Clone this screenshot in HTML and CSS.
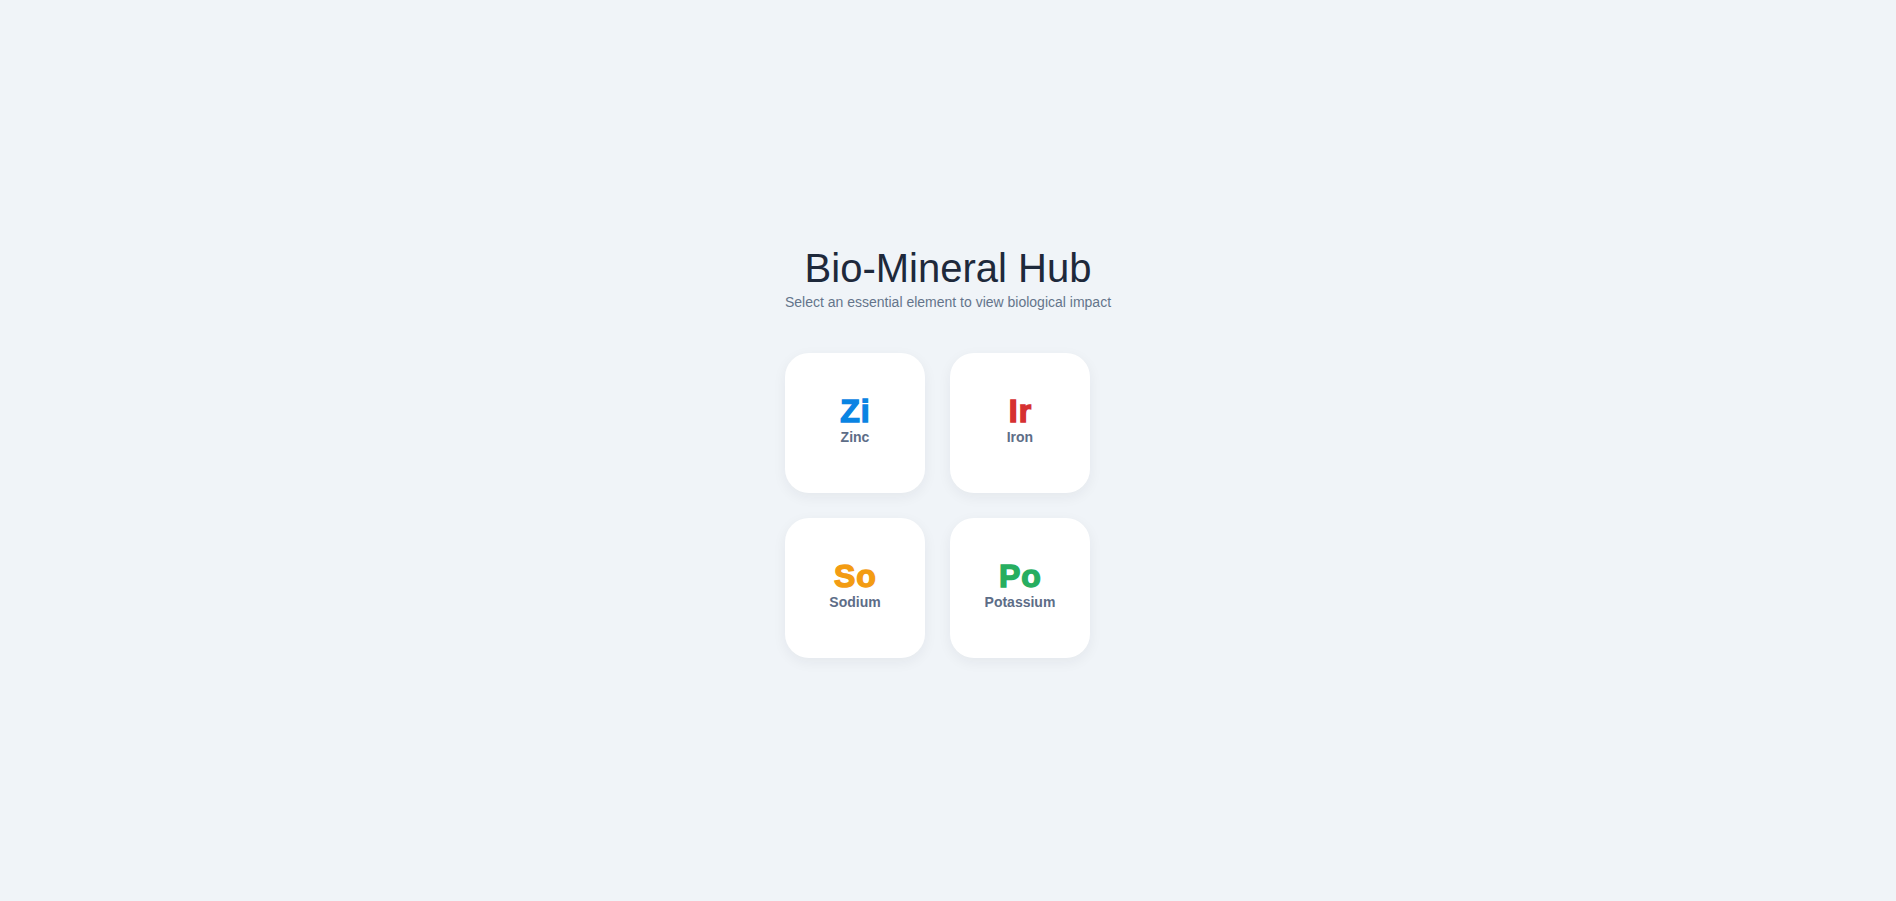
FILE: index.html
```html
<!DOCTYPE html>
<html lang="en">
<head>
<meta charset="utf-8">
<title>Bio-Mineral Hub</title>
<link rel="stylesheet" href="styles.css">
</head>
<body>
<main class="hub">
  <header class="hub-header">
    <h1 class="hub-title">Bio-Mineral Hub</h1>
    <p class="hub-subtitle">Select an essential element to view biological impact</p>
  </header>
  <div class="grid">
    <div class="card">
      <span class="symbol zinc">Zi</span>
      <span class="name">Zinc</span>
    </div>
    <div class="card">
      <span class="symbol iron">Ir</span>
      <span class="name">Iron</span>
    </div>
    <div class="card">
      <span class="symbol sodium">So</span>
      <span class="name">Sodium</span>
    </div>
    <div class="card">
      <span class="symbol potassium">Po</span>
      <span class="name">Potassium</span>
    </div>
  </div>
</main>
</body>
</html>
```

FILE: styles.css
```css
html, body {
  margin: 0;
  padding: 0;
}
body {
  background: #f0f4f8;
  font-family: "Liberation Sans", Arial, sans-serif;
  min-height: 100vh;
  display: flex;
  align-items: center;
  justify-content: center;
}
.hub {
  display: flex;
  flex-direction: column;
  align-items: flex-start;
  padding-top: 2px;
}
.hub-header {
  align-self: stretch;
  text-align: center;
  margin-bottom: 43px;
}
.hub-title {
  margin: 0;
  font-size: 40px;
  font-weight: normal;
  color: #1e293b;
  line-height: 46px;
}
.hub-subtitle {
  margin: 3px 0 0;
  font-size: 14px;
  line-height: 16px;
  color: #64748b;
}
.grid {
  display: grid;
  grid-template-columns: repeat(2, 140px);
  grid-auto-rows: 140px;
  gap: 25px;
}
.card {
  background: #ffffff;
  border-radius: 24px;
  box-shadow: 0 4px 14px rgba(30, 41, 59, 0.06);
  display: flex;
  flex-direction: column;
  align-items: center;
  justify-content: center;
  padding-bottom: 6px;
  box-sizing: border-box;
}
.symbol {
  font-size: 32px;
  font-weight: bold;
  line-height: 32px;
  letter-spacing: 1px;
  margin-left: 1px;
  -webkit-text-stroke: 1.4px currentColor;
}
.name {
  margin-top: 2px;
  font-size: 14px;
  font-weight: bold;
  line-height: 16px;
  color: #5d6d87;
}
.zinc { color: #0984e3; }
.iron { color: #d63031; }
.sodium { color: #f39c12; }
.potassium { color: #27ae60; }
```
